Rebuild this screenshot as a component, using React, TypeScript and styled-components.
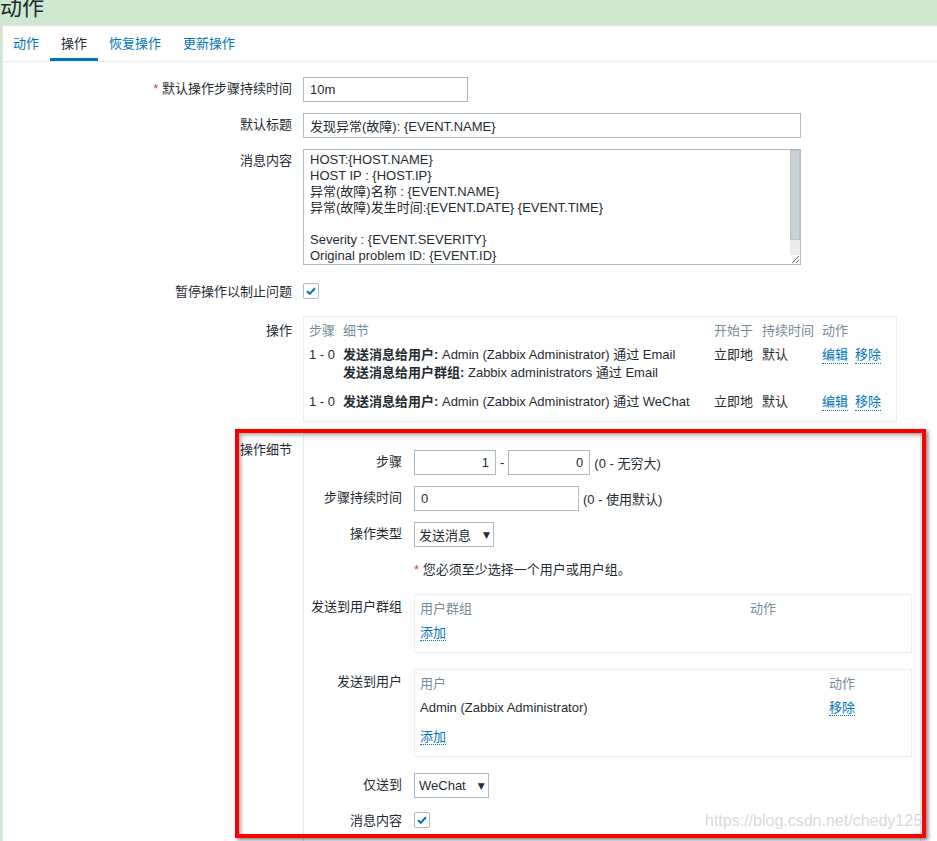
import React from 'react';
import styled, { createGlobalStyle } from 'styled-components';

const GlobalStyle = createGlobalStyle`
  html, body {
    margin: 0;
    padding: 0;
    overflow: hidden;
  }
  body {
    background: #cde8cf;
    font-family: 'Liberation Sans', 'Noto Sans CJK SC', sans-serif;
    font-size: 13px;
    color: #1f2c33;
  }
`;

const Page = styled.div`
  position: relative;
  width: 937px;
  height: 841px;
  overflow: hidden;
`;

const Header = styled.header`
  height: 25px;
  overflow: hidden;
`;

const Title = styled.h1`
  margin: -3px 0 0;
  font-size: 22px;
  line-height: 22px;
  font-weight: normal;
  color: #1f2c33;
`;

const Panel = styled.main`
  margin-left: 2px;
  height: 100%;
  background: #fff;
  border-top: 1px solid #dfe4e7;
  border-left: 1px solid #dfe4e7;
`;

const TabBar = styled.nav`
  display: flex;
  height: 35px;
  margin-left: -1px;
  border-bottom: 1px solid #ebeef0;
`;

const Tab = styled.a<{ $active?: boolean }>`
  display: block;
  padding: 0 11px;
  line-height: 35px;
  text-decoration: none;
  color: ${(p) => (p.$active ? '#1f2c33' : '#0275b8')};
  box-shadow: ${(p) => (p.$active ? 'inset 0 -3px 0 #0275b8' : 'none')};
`;

const Form = styled.div`
  display: flex;
  flex-direction: column;
  gap: 11px;
  padding-top: 15px;
`;

const Row = styled.div<{ $mt?: number }>`
  display: grid;
  grid-template-columns: 289px 1fr;
  column-gap: 11px;
  align-items: start;
  min-height: 25px;
  margin-top: ${(p) => p.$mt ?? 0}px;
`;

const DetailsRow = styled(Row)`
  position: relative;

  &::after {
    content: '';
    position: absolute;
    left: 232px;
    top: -4px;
    width: 691px;
    height: 409px;
    box-sizing: border-box;
    border: 4px solid #ff0000;
    box-shadow: 2px 2px 4px rgba(0, 0, 0, 0.5), inset 2px 2px 4px rgba(0, 0, 0, 0.35);
    pointer-events: none;
  }
`;

const Label = styled.label<{ $pt?: number }>`
  display: block;
  text-align: right;
  line-height: 16px;
  white-space: nowrap;
  padding-top: ${(p) => p.$pt ?? 4}px;
`;

const Required = styled.span`
  color: #e33734;
`;

const Field = styled.div`
  display: flex;
  align-items: center;
  gap: 4px;
  min-height: 25px;
`;

const TextInput = styled.input<{ $w: number; $right?: boolean }>`
  box-sizing: border-box;
  display: block;
  width: ${(p) => p.$w}px;
  height: 25px;
  padding: 0 6px;
  border: 1px solid #acbbc2;
  background: #fff;
  font: inherit;
  color: #1f2c33;
  text-align: ${(p) => (p.$right ? 'right' : 'left')};
  outline: none;
`;

const TextAreaWrap = styled.div`
  position: relative;
  width: 498px;
  height: 116px;
`;

const TextArea = styled.textarea`
  box-sizing: border-box;
  display: block;
  width: 498px;
  height: 116px;
  padding: 2px 12px 0 6px;
  border: 1px solid #acbbc2;
  font: inherit;
  line-height: 16px;
  color: #1f2c33;
  resize: vertical;
  overflow: hidden;
  outline: none;
`;

const ScrollTrack = styled.div`
  position: absolute;
  top: 1px;
  right: 1px;
  width: 10px;
  height: 105px;
  background: #ebebeb;
  pointer-events: none;
`;

const ScrollThumb = styled.div`
  box-sizing: border-box;
  height: 90px;
  background: #c8d2d7;
  border: 1px solid #b5c2c8;
`;

const CheckBox = styled.span<{ $mt?: number }>`
  box-sizing: border-box;
  display: flex;
  align-items: center;
  justify-content: center;
  width: 16px;
  height: 16px;
  margin-top: ${(p) => p.$mt ?? 4}px;
  border: 1px solid #acbbc2;
  border-radius: 2px;
  background: #fff;
`;

const TableBox = styled.div<{ $w: number }>`
  box-sizing: border-box;
  width: ${(p) => p.$w}px;
  padding: 5px 5px 2px;
  border: 1px solid #ebeef0;
  line-height: 18px;
`;

const GridRow = styled.div<{ $cols: string; $head?: boolean }>`
  display: grid;
  grid-template-columns: ${(p) => p.$cols};
  align-items: start;
  padding: ${(p) => (p.$head ? '0 0 3px' : '3px 0 8px')};
  color: ${(p) => (p.$head ? '#768d99' : '#1f2c33')};
  white-space: nowrap;
`;

const Bold = styled.b`
  font-weight: bold;
`;

const Actions = styled.div`
  display: flex;
  align-items: flex-start;
  gap: 7px;
`;

const Link = styled.a`
  color: #0275b8;
  text-decoration: none;
  border-bottom: 1px dotted #0275b8;
  line-height: 17px;
  cursor: pointer;
`;

const DetailsBox = styled.div`
  box-sizing: border-box;
  width: 618px;
  padding: 16px 0 20px;
  border: 1px solid #e4e8ea;
  display: flex;
  flex-direction: column;
  gap: 11px;
`;

const InnerRow = styled.div<{ $mt?: number }>`
  display: grid;
  grid-template-columns: 98px 1fr;
  column-gap: 12px;
  align-items: start;
  min-height: 25px;
  margin-top: ${(p) => p.$mt ?? 0}px;
`;

const Hint = styled.span`
  white-space: nowrap;
`;

const Note = styled.div`
  padding-top: 4px;
  line-height: 16px;
`;

const Select = styled.div`
  box-sizing: border-box;
  display: inline-flex;
  align-items: center;
  gap: 12px;
  height: 25px;
  padding: 0 3px 0 4px;
  border: 1px solid #acbbc2;
  background: #fff;
`;

const Arrow = styled.span`
  font-size: 9px;
  font-family: 'DejaVu Sans', sans-serif;
  color: #1f2c33;
`;

const Watermark = styled.div`
  position: absolute;
  left: 705px;
  top: 811px;
  font-family: 'Liberation Sans', sans-serif;
  font-size: 16px;
  line-height: 20px;
  color: rgba(200, 200, 200, 0.7);
  pointer-events: none;
`;

const Check = () => (
  <svg width="10" height="8" viewBox="0 0 10 8">
    <path d="M1 4.2 L3.8 6.8 L9 1.2" fill="none" stroke="#0275b8" strokeWidth="2" />
  </svg>
);

const message = [
  'HOST:{HOST.NAME}',
  'HOST IP : {HOST.IP}',
  '异常(故障)名称 : {EVENT.NAME}',
  '异常(故障)发生时间:{EVENT.DATE} {EVENT.TIME}',
  '',
  'Severity : {EVENT.SEVERITY}',
  'Original problem ID: {EVENT.ID}',
  '{TRIGGER.URL}',
].join('\n');

const OPS_COLS = '34px 371px 48px 60px 1fr';

const App: React.FC = () => (
  <Page>
    <GlobalStyle />
    <Header>
      <Title>动作</Title>
    </Header>
    <Panel>
      <TabBar>
        <Tab>动作</Tab>
        <Tab $active>操作</Tab>
        <Tab>恢复操作</Tab>
        <Tab>更新操作</Tab>
      </TabBar>
      <Form>
        <Row>
          <Label>
            <Required>*</Required> 默认操作步骤持续时间
          </Label>
          <TextInput $w={165} defaultValue="10m" readOnly />
        </Row>
        <Row>
          <Label>默认标题</Label>
          <TextInput $w={498} defaultValue="发现异常(故障): {EVENT.NAME}" readOnly />
        </Row>
        <Row>
          <Label>消息内容</Label>
          <TextAreaWrap>
            <TextArea defaultValue={message} readOnly />
            <ScrollTrack>
              <ScrollThumb />
            </ScrollTrack>
          </TextAreaWrap>
        </Row>
        <Row $mt={4}>
          <Label>暂停操作以制止问题</Label>
          <CheckBox $mt={3}>
            <Check />
          </CheckBox>
        </Row>
        <Row>
          <Label $pt={7}>操作</Label>
          <TableBox $w={594}>
            <GridRow $cols={OPS_COLS} $head>
              <span>步骤</span>
              <span>细节</span>
              <span>开始于</span>
              <span>持续时间</span>
              <span>动作</span>
            </GridRow>
            <GridRow $cols={OPS_COLS}>
              <span>1 - 0</span>
              <div>
                <div>
                  <Bold>发送消息给用户:</Bold> Admin (Zabbix Administrator) 通过 Email
                </div>
                <div>
                  <Bold>发送消息给用户群组:</Bold> Zabbix administrators 通过 Email
                </div>
              </div>
              <span>立即地</span>
              <span>默认</span>
              <Actions>
                <Link>编辑</Link>
                <Link>移除</Link>
              </Actions>
            </GridRow>
            <GridRow $cols={OPS_COLS}>
              <span>1 - 0</span>
              <div>
                <Bold>发送消息给用户:</Bold> Admin (Zabbix Administrator) 通过 WeChat
              </div>
              <span>立即地</span>
              <span>默认</span>
              <Actions>
                <Link>编辑</Link>
                <Link>移除</Link>
              </Actions>
            </GridRow>
          </TableBox>
        </Row>
        <DetailsRow>
          <Label $pt={9}>操作细节</Label>
          <DetailsBox>
            <InnerRow>
              <Label>步骤</Label>
              <Field>
                <TextInput $w={82} $right defaultValue="1" readOnly />
                <span>-</span>
                <TextInput $w={82} $right defaultValue="0" readOnly />
                <Hint>(0 - 无穷大)</Hint>
              </Field>
            </InnerRow>
            <InnerRow>
              <Label>步骤持续时间</Label>
              <Field>
                <TextInput $w={165} defaultValue="0" readOnly />
                <Hint>(0 - 使用默认)</Hint>
              </Field>
            </InnerRow>
            <InnerRow>
              <Label>操作类型</Label>
              <Field>
                <Select>
                  <span>发送消息</span>
                  <Arrow>▼</Arrow>
                </Select>
              </Field>
            </InnerRow>
            <InnerRow>
              <span />
              <Note>
                <Required>*</Required> 您必须至少选择一个用户或用户组。
              </Note>
            </InnerRow>
            <InnerRow>
              <Label $pt={5}>发送到用户群组</Label>
              <TableBox $w={498}>
                <GridRow $cols="330px 1fr" $head>
                  <span>用户群组</span>
                  <span>动作</span>
                </GridRow>
                <GridRow $cols="1fr">
                  <div>
                    <Link>添加</Link>
                  </div>
                </GridRow>
              </TableBox>
            </InnerRow>
            <InnerRow $mt={5}>
              <Label $pt={5}>发送到用户</Label>
              <TableBox $w={498}>
                <GridRow $cols="409px 1fr" $head>
                  <span>用户</span>
                  <span>动作</span>
                </GridRow>
                <GridRow $cols="409px 1fr">
                  <span>Admin (Zabbix Administrator)</span>
                  <div>
                    <Link>移除</Link>
                  </div>
                </GridRow>
                <GridRow $cols="1fr">
                  <div>
                    <Link>添加</Link>
                  </div>
                </GridRow>
              </TableBox>
            </InnerRow>
            <InnerRow $mt={5}>
              <Label>仅送到</Label>
              <Field>
                <Select>
                  <span>WeChat</span>
                  <Arrow>▼</Arrow>
                </Select>
              </Field>
            </InnerRow>
            <InnerRow>
              <Label>消息内容</Label>
              <CheckBox $mt={3}>
                <Check />
              </CheckBox>
            </InnerRow>
          </DetailsBox>
        </DetailsRow>
      </Form>
    </Panel>
    <Watermark>https://blog.csdn.net/chedy125</Watermark>
  </Page>
);

export default App;
